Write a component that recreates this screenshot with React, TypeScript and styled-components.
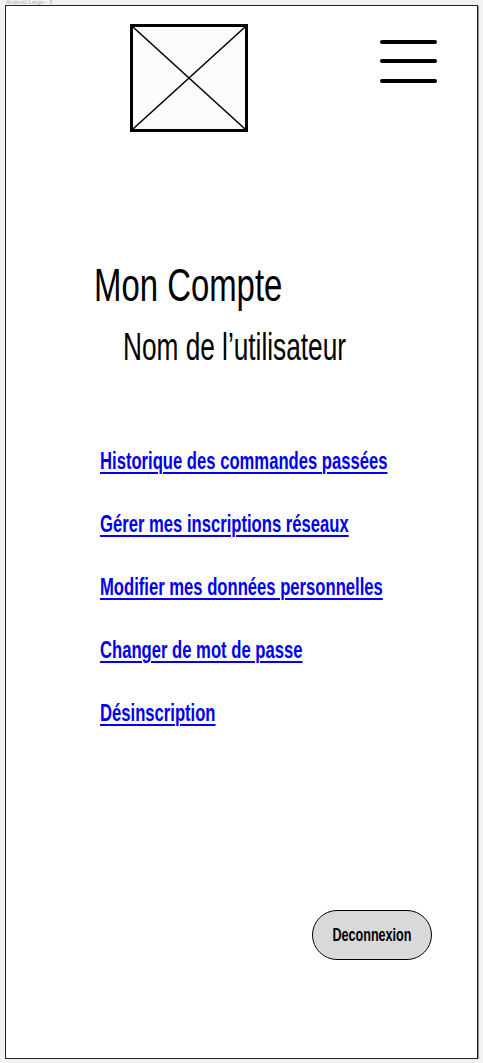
import styled, { createGlobalStyle } from 'styled-components';

const GlobalStyle = createGlobalStyle`
  html, body {
    margin: 0;
    padding: 0;
    background: #f2f2f2;
  }
  body {
    font-family: "Liberation Sans", Arial, sans-serif;
    overflow-x: hidden;
  }
`;

const links = [
  'Historique des commandes passées',
  'Gérer mes inscriptions réseaux',
  'Modifier mes données personnelles',
  'Changer de mot de passe',
  'Désinscription',
];

// no condensed face is installed, so the text is narrowed by hand
const Narrow = styled.span<{ $scale?: number; $origin?: string }>`
  display: inline-block;
  white-space: nowrap;
  transform: scaleX(${(p) => p.$scale ?? 0.7});
  transform-origin: ${(p) => p.$origin ?? 'left'} center;
`;

const ImagePlaceholder = () => (
  <ImageBox>
    <svg width="112" height="102" viewBox="0 0 112 102" preserveAspectRatio="none">
      <line x1="0" y1="0" x2="112" y2="102" stroke="#000" strokeWidth="1.4" />
      <line x1="112" y1="0" x2="0" y2="102" stroke="#000" strokeWidth="1.4" />
    </svg>
  </ImageBox>
);

const App = () => {
  return (
    <>
      <GlobalStyle />
      <FrameLabel>Android Large - 3</FrameLabel>
      <Frame>
        <Header>
          <ImagePlaceholder />
          <MenuButton aria-label="menu">
            <span />
            <span />
            <span />
          </MenuButton>
        </Header>
        <TitleBlock>
          <Title>
            <Narrow>Mon Compte</Narrow>
          </Title>
          <UserName>
            <Narrow $scale={0.69}>Nom de l’utilisateur</Narrow>
          </UserName>
        </TitleBlock>
        <LinkList>
          {links.map((label) => (
            <AccountLink key={label} href="#">
              <Narrow $scale={0.693}>{label}</Narrow>
            </AccountLink>
          ))}
        </LinkList>
        <Footer>
          <LogoutButton>
            <Narrow $scale={0.72} $origin="center">
              Deconnexion
            </Narrow>
          </LogoutButton>
        </Footer>
      </Frame>
    </>
  );
};

export default App;

const FrameLabel = styled.div`
  height: 5px;
  padding-left: 6px;
  font-size: 6px;
  line-height: 5px;
  color: #b0b0b0;
  overflow: hidden;
`;

const Frame = styled.main`
  box-sizing: border-box;
  margin-left: 5px;
  width: 473px;
  height: 1054px;
  background: #fff;
  border: 1px solid #222;
  box-shadow: 1px 1px 0 #8a8a8a;
  display: flex;
  flex-direction: column;
  overflow: hidden;
`;

const Header = styled.header`
  display: flex;
  align-items: flex-start;
  padding: 18px 40px 0 124px;
`;

const ImageBox = styled.div`
  box-sizing: border-box;
  width: 118px;
  height: 108px;
  border: 3px solid #000;
  background: #fdfbfd;
  svg {
    display: block;
  }
`;

const MenuButton = styled.div`
  margin-left: auto;
  margin-top: 16px;
  width: 57px;
  display: flex;
  flex-direction: column;
  gap: 15.4px;
  span {
    display: block;
    height: 4px;
    border-radius: 2px;
    background: #000;
  }
`;

const TitleBlock = styled.section`
  display: flex;
  flex-direction: column;
  padding-left: 88px;
  margin-top: 125px;
`;

const Title = styled.h1`
  margin: 0;
  font-size: 47px;
  font-weight: 400;
  line-height: 56px;
  color: #000;
`;

const UserName = styled.h2`
  margin: 12px 0 0 29px;
  font-size: 38px;
  font-weight: 400;
  line-height: 44px;
  color: #000;
`;

const LinkList = styled.nav`
  display: flex;
  flex-direction: column;
  align-items: flex-start;
  gap: 35px;
  padding-left: 94px;
  margin-top: 78px;
`;

const AccountLink = styled.a`
  font-size: 24px;
  font-weight: 700;
  line-height: 28px;
  color: #0000ee;
  text-decoration: none;
  span {
    text-decoration: underline;
    text-decoration-thickness: 2px;
    text-underline-offset: 3px;
  }
`;

const Footer = styled.footer`
  margin-top: auto;
  display: flex;
  justify-content: flex-end;
  padding: 0 45px 98px 0;
`;

const LogoutButton = styled.button`
  box-sizing: border-box;
  width: 120px;
  height: 50px;
  padding: 0;
  border: 1px solid #000;
  border-radius: 25px;
  background: #d9d9d9;
  font-family: inherit;
  font-size: 17.5px;
  font-weight: 700;
  color: #000;
  display: flex;
  align-items: center;
  justify-content: center;
`;
